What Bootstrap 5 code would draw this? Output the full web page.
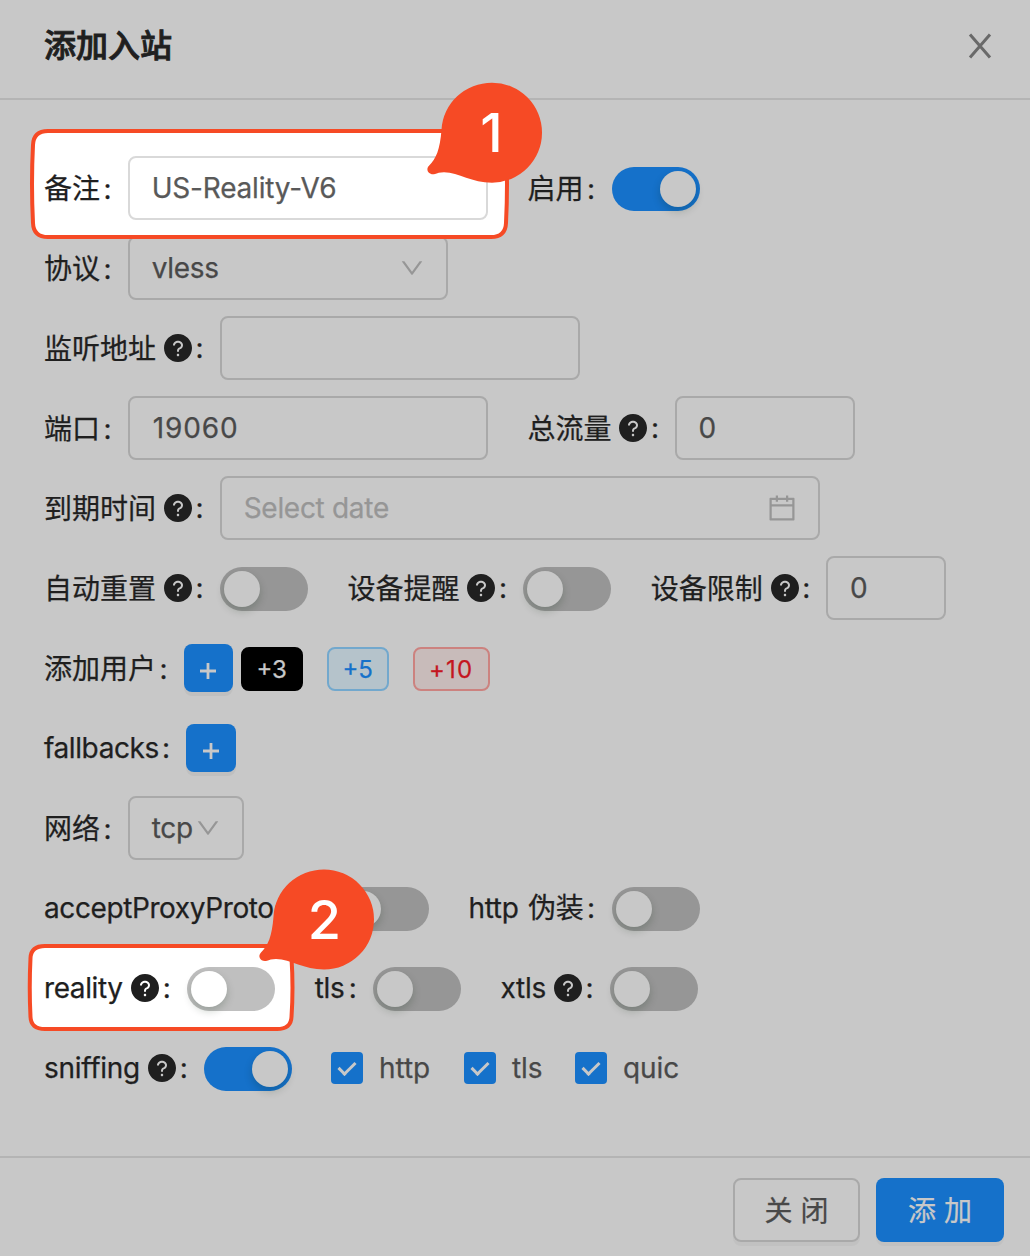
<!DOCTYPE html>
<html lang="zh-CN">
<head>
<meta charset="utf-8">
<meta name="viewport" content="width=device-width, initial-scale=1">
<title>添加入站</title>
<link href="https://cdn.jsdelivr.net/npm/bootstrap@5.3.0/dist/css/bootstrap.min.css" rel="stylesheet">
<style>
  body { width: 1030px; height: 1256px; overflow: hidden; background: #c8c8c8; color: #1f1f1f;
    font-family: Inter, "Noto Sans CJK SC", sans-serif; font-size: 28px; line-height: 1.5; letter-spacing: -.3px; -webkit-text-stroke: .25px currentColor; }
  .cjk { letter-spacing: 0; padding-top: 2px; }
  .cjk .help { margin-top: -2px; }
  .dialog-head { height: 100px; padding: 0 38px 6px 44px; border-bottom: 2px solid #b4b4b4; }
  .dialog-title { font-size: 32px; font-weight: 500; line-height: 1; letter-spacing: 0; -webkit-text-stroke: .9px currentColor; }
  .dialog-body { height: 1056px; padding: 48px 0 48px 44px; }
  .dialog-foot { height: 100px; padding: 20px 26px 0 0; gap: 16px; border-top: 2px solid #b4b4b4; }
  .form-line { height: 80px; gap: 39.7px; }
  .field-label { white-space: nowrap; }
  .field-label::after { content: ":"; display: inline-block; width: 7.7px; margin: 0 16px 0 4px; text-align: center; letter-spacing: 0; position: relative; left: -.5px; }
  .cjk::after { margin-top: -2px; }
  .snug::after { margin-right: 16.6px; }
  .help { width: 28px; height: 28px; margin-left: 8px; fill: currentColor; flex: none; }
  .form-control.box { height: 64px; padding: 0 22px; font-size: 28px; letter-spacing: inherit; color: #484848; background: transparent;
    border: 2px solid #a9a9a9; border-radius: 8px; display: flex; align-items: center; }
  .form-control.lit { border-color: #d9d9d9; color: #595959; letter-spacing: -.2px; }
  .form-control.digits { letter-spacing: .9px; padding-left: 23px; }
  .form-control.single { padding-left: 21.5px; }
  .box .hint { color: #969696; }
  .w60 { width: 120px; } .w90 { width: 180px; } .w160 { width: 320px; } .w180 { width: 360px; } .w300 { width: 600px; } .w58 { width: 116px; }
  .glyph { fill: #969696; flex: none; }
  .form-check-input.toggle { width: 88px; height: 44px; margin: 2px 0 0; border: 0; border-radius: 22px; background: #969696; position: relative; float: none; }
  .toggle::before { content: ""; position: absolute; left: 4px; top: 4px; width: 36px; height: 36px; border-radius: 50%;
    background: #c8c8c8; box-shadow: 0 4px 8px rgba(0,35,11,.2); }
  .form-check-input.toggle:checked { background: #1571ca; }
  .toggle:checked::before { left: 48px; }
  .form-check-input.toggle.lit { background: #bfbfbf; }
  .toggle.lit::before { background: #fff; }
  .btn.plus { width: 49px; height: 48px; padding: 0; border: 0; border-radius: 8px; background: #1571ca; box-shadow: 0 4px 0 rgba(0,0,0,.045); }
  .btn.plus.wide { width: 50px; }
  .plus svg { stroke: #c8c8c8; stroke-width: 2.8; margin-top: 2px; }
  .btn.count { height: 44px; margin: 2px 16px 0 8px; padding: 0 12px; border: 2px solid; border-radius: 8px; font-size: 24px; line-height: 42px; letter-spacing: 0; }
  .btn.c3 { width: 62px; color: #c8c8c8; background: #000; border-color: #000; }
  .btn.c5 { width: 62px; color: #1571ca; background: #b5c3cb; border-color: #72a8cd; }
  .btn.c10 { width: 77px; color: #c4161f; background: #c8bbba; border-color: #cc827f; letter-spacing: 1.2px; padding: 0 10px; }
  .form-check-input.tick { appearance: none; width: 32px; height: 32px; margin: 0; border: 0; border-radius: 4px; position: relative; }
  .form-check-input.tick:checked { background: #1571ca; }
  .tick::after { content: ""; position: absolute; left: 11px; top: 6px; width: 10px; height: 17px; border: solid #c8c8c8; border-width: 0 3.5px 3.5px 0; transform: rotate(45deg); }
  .opts { color: #484848; gap: 32px; margin-left: -.8px; letter-spacing: 0; }
  .opt-http { width: 101px; } .opt-tls { width: 79px; }
  .btn.act { height: 64px; padding: 2px 0 0 8px; border-radius: 8px; font-size: 28px; letter-spacing: 8px; line-height: 60px; box-shadow: 0 4px 0 rgba(0,0,0,.03); }
  .btn.act-close { width: 127px; color: #484848; border: 2px solid #a9a9a9; line-height: 56px; }
  .btn.act-add { width: 128px; color: #c8c8c8; background: #1571ca; border: 0; }
  .t-fall { width: 114.5px; letter-spacing: -.4px; } .t-accept { width: 269px; letter-spacing: -.4px; } .t-reality { width: 79.3px; letter-spacing: -.4px; } .t-tls { width: 30.5px; } .t-xtls { width: 45.5px; } .t-sniff { width: 96.3px; } .t-http { width: 115px; word-spacing: 2px; }
  .marks { left: 0; top: 0; pointer-events: none; }
  .marks.under { z-index: 1; } .marks.over { z-index: 3; }
  .above { z-index: 2; }
  .marks text { font: 500 54px Inter, sans-serif; fill: #fff; text-anchor: middle; letter-spacing: 0; -webkit-text-stroke: 0; }
</style>
</head>
<body class="position-relative">
<svg class="d-none">
  <symbol id="q" viewBox="64 64 896 896"><path d="M512 64C264.6 64 64 264.6 64 512s200.6 448 448 448 448-200.6 448-448S759.4 64 512 64zm0 708c-22.1 0-40-17.9-40-40s17.9-40 40-40 40 17.9 40 40-17.9 40-40 40zm62.9-219.5a48.3 48.3 0 0 0-30.9 44.8V620c0 4.4-3.6 8-8 8h-48c-4.4 0-8-3.6-8-8v-21.5c0-23.1 6.7-45.9 19.9-64.9 12.9-18.6 30.9-32.8 52.1-40.9 34-13.1 56-41.6 56-72.7 0-44.1-43.1-80-96-80s-96 35.9-96 80v7.6c0 4.4-3.6 8-8 8h-48c-4.4 0-8-3.6-8-8V420c0-39.3 17.2-76 48.4-103.3C430.4 290.4 470 276 512 276s81.6 14.5 111.6 40.7C654.8 344 672 380.7 672 420c0 57.8-38.1 109.8-97.1 132.5z"/></symbol>
  <symbol id="down" viewBox="64 64 896 896"><path d="M884 256h-75c-5.1 0-9.9 2.5-12.9 6.6L512 654.2 227.9 262.6c-3-4.1-7.8-6.6-12.9-6.6h-75c-6.5 0-10.3 7.4-6.5 12.7l352.6 486.1c12.8 17.6 39 17.6 51.7 0l352.6-486.1c3.9-5.3.1-12.7-6.4-12.7z"/></symbol>
  <symbol id="cal" viewBox="64 64 896 896"><path d="M880 184H712v-64c0-4.4-3.6-8-8-8h-56c-4.4 0-8 3.6-8 8v64H384v-64c0-4.4-3.6-8-8-8h-56c-4.4 0-8 3.6-8 8v64H144c-17.7 0-32 14.3-32 32v664c0 17.7 14.3 32 32 32h736c17.7 0 32-14.3 32-32V216c0-17.7-14.3-32-32-32zm-40 656H184V460h656v380zM184 392V256h128v48c0 4.4 3.6 8 8 8h56c4.4 0 8-3.6 8-8v-48h256v48c0 4.4 3.6 8 8 8h56c4.4 0 8-3.6 8-8v-48h128v136H184z"/></symbol>
</svg>

<header class="dialog-head d-flex align-items-center justify-content-between">
  <h1 class="dialog-title m-0">添加入站</h1>
  <svg width="24" height="26" viewBox="0 0 24 26" fill="none" stroke="#696969" stroke-width="3"><path d="M2 1.500 22 24.500M22 1.500 2 24.500"/></svg>
</header>

<main class="dialog-body">
  <div class="form-line d-flex align-items-center">
    <div class="d-flex align-items-center position-relative above"><label class="field-label cjk">备注</label><input class="form-control box lit w180" value="US-Reality-V6"></div>
    <div class="d-flex align-items-center"><label class="field-label cjk snug">启用</label><input type="checkbox" class="form-check-input toggle" checked></div>
  </div>
  <div class="form-line d-flex align-items-center">
    <div class="d-flex align-items-center"><label class="field-label cjk">协议</label><div class="form-control box w160 justify-content-between">vless<svg class="glyph" width="24" height="24"><use href="#down"/></svg></div></div>
  </div>
  <div class="form-line d-flex align-items-center">
    <div class="d-flex align-items-center"><label class="field-label cjk d-flex align-items-center">监听地址<svg class="help"><use href="#q"/></svg></label><input class="form-control box w180"></div>
  </div>
  <div class="form-line d-flex align-items-center">
    <div class="d-flex align-items-center"><label class="field-label cjk">端口</label><input class="form-control box digits w180" value="19060"></div>
    <div class="d-flex align-items-center"><label class="field-label cjk d-flex align-items-center">总流量<svg class="help"><use href="#q"/></svg></label><input class="form-control box single w90" value="0"></div>
  </div>
  <div class="form-line d-flex align-items-center">
    <div class="d-flex align-items-center"><label class="field-label cjk d-flex align-items-center">到期时间<svg class="help"><use href="#q"/></svg></label><div class="form-control box w300 justify-content-between"><span class="hint">Select date</span><svg class="glyph" width="28" height="28"><use href="#cal"/></svg></div></div>
  </div>
  <div class="form-line d-flex align-items-center">
    <div class="d-flex align-items-center"><label class="field-label cjk d-flex align-items-center">自动重置<svg class="help"><use href="#q"/></svg></label><input type="checkbox" class="form-check-input toggle"></div>
    <div class="d-flex align-items-center"><label class="field-label cjk d-flex align-items-center">设备提醒<svg class="help"><use href="#q"/></svg></label><input type="checkbox" class="form-check-input toggle"></div>
    <div class="d-flex align-items-center"><label class="field-label cjk d-flex align-items-center">设备限制<svg class="help"><use href="#q"/></svg></label><input class="form-control box single w60" value="0"></div>
  </div>
  <div class="form-line d-flex align-items-center">
    <div class="d-flex align-items-center"><label class="field-label cjk">添加用户</label>
      <button class="btn plus"><svg width="18" height="18"><path d="M9 1v16M1 9h16"/></svg></button>
      <button class="btn count c3">+3</button><button class="btn count c5">+5</button><button class="btn count c10">+10</button>
    </div>
  </div>
  <div class="form-line d-flex align-items-center">
    <div class="d-flex align-items-center"><label class="field-label d-flex"><span class="t-fall">fallbacks</span></label>
      <button class="btn plus wide"><svg width="18" height="18"><path d="M9 1v16M1 9h16"/></svg></button></div>
  </div>
  <div class="form-line d-flex align-items-center">
    <div class="d-flex align-items-center"><label class="field-label cjk">网络</label><div class="form-control box w58 justify-content-between">tcp<svg class="glyph" width="24" height="24"><use href="#down"/></svg></div></div>
  </div>
  <div class="form-line d-flex align-items-center">
    <div class="d-flex align-items-center"><label class="field-label d-flex"><span class="t-accept">acceptProxyProtocol</span></label><input type="checkbox" class="form-check-input toggle"></div>
    <div class="d-flex align-items-center"><label class="field-label snug d-flex"><span class="t-http">http 伪装</span></label><input type="checkbox" class="form-check-input toggle"></div>
  </div>
  <div class="form-line d-flex align-items-center">
    <div class="d-flex align-items-center position-relative above"><label class="field-label d-flex align-items-center"><span class="t-reality">reality</span><svg class="help"><use href="#q"/></svg></label><input type="checkbox" class="form-check-input toggle lit"></div>
    <div class="d-flex align-items-center"><label class="field-label d-flex"><span class="t-tls">tls</span></label><input type="checkbox" class="form-check-input toggle"></div>
    <div class="d-flex align-items-center"><label class="field-label d-flex align-items-center"><span class="t-xtls">xtls</span><svg class="help"><use href="#q"/></svg></label><input type="checkbox" class="form-check-input toggle"></div>
  </div>
  <div class="form-line d-flex align-items-center">
    <div class="d-flex align-items-center"><label class="field-label d-flex align-items-center"><span class="t-sniff">sniffing</span><svg class="help"><use href="#q"/></svg></label><input type="checkbox" class="form-check-input toggle" checked></div>
    <div class="opts d-flex">
      <label class="opt-http d-flex align-items-center gap-3"><input type="checkbox" class="form-check-input tick" checked><span>http</span></label>
      <label class="opt-tls d-flex align-items-center gap-3"><input type="checkbox" class="form-check-input tick" checked><span>tls</span></label>
      <label class="d-flex align-items-center gap-3"><input type="checkbox" class="form-check-input tick" checked><span>quic</span></label>
    </div>
  </div>
</main>

<footer class="dialog-foot d-flex justify-content-end">
  <button class="btn act act-close">关闭</button>
  <button class="btn act act-add">添加</button>
</footer>

<!-- highlighted areas -->
<svg class="marks under position-absolute" width="1030" height="1256" fill="#fff" stroke="#f64a25" stroke-width="4">
  <path d="M48 131H491Q505.500 131 506 145Q508 184 506 223Q505.500 237 491 237H48Q33.500 237 33 223Q31 184 33 145Q33.500 131 48 131Z"/>
  <path d="M45 946H277Q291 946 291.500 958Q293.500 988 291.500 1017Q291 1029 277 1029H45Q31 1029 30.500 1017Q29 988 30.500 958Q31 946 45 946Z"/>
</svg>
<!-- numbered callouts -->
<svg class="marks over position-absolute" width="1030" height="1256">
  <defs><path id="drop" fill="#f64a25" d="M0-50A50 50 0 0 1 0 50C-20 50-33 40-48 39.500C-52 39.500-55 40.500-57 41.300C-63 43-67 37-63 33C-56 26-52 17-50.500-3A50.500 49.500 0 0 1 0-50Z"/></defs>
  <use href="#drop" x="492" y="132.700"/><text x="491.500" y="152">1</text>
  <use href="#drop" x="324" y="919.500"/><text x="324.500" y="939">2</text>
</svg>
<script src="https://cdn.jsdelivr.net/npm/bootstrap@5.3.0/dist/js/bootstrap.bundle.min.js"></script>
</body>
</html>
